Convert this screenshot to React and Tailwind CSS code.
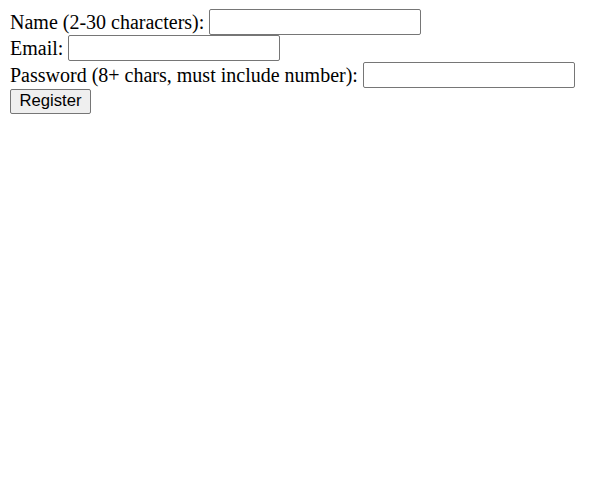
export default function App() {
  const input = "w-[212px] h-[26px] border border-[#767676] rounded-[2px] bg-white px-[2px] outline-none";
  return (
    <div className="min-h-screen bg-white text-black pl-[10px] pt-[8px] text-[20px]" style={{ fontFamily: '"Liberation Serif", "Times New Roman", serif' }}>
      <form className="flex flex-col items-start" onSubmit={(e) => e.preventDefault()}>
        <div className="flex items-center h-[27px] gap-[5px]">
          <label>Name (2-30 characters):</label>
          <input className={input} type="text" />
        </div>
        <div className="flex items-center h-[26px] gap-[5px]">
          <label>Email:</label>
          <input className={input} type="email" />
        </div>
        <div className="flex items-center h-[27px] gap-[5px]">
          <label>Password (8+ chars, must include number):</label>
          <input className={input} type="password" />
        </div>
        <div className="flex items-center h-[26px]">
          <button type="submit" className="w-[81px] h-[25px] border border-[#767676] rounded-[2px] bg-[#efefef] text-black text-[16.67px] leading-none flex items-center justify-center" style={{ fontFamily: '"Liberation Sans", Arial, sans-serif' }}>
            Register
          </button>
        </div>
      </form>
    </div>
  );
}
